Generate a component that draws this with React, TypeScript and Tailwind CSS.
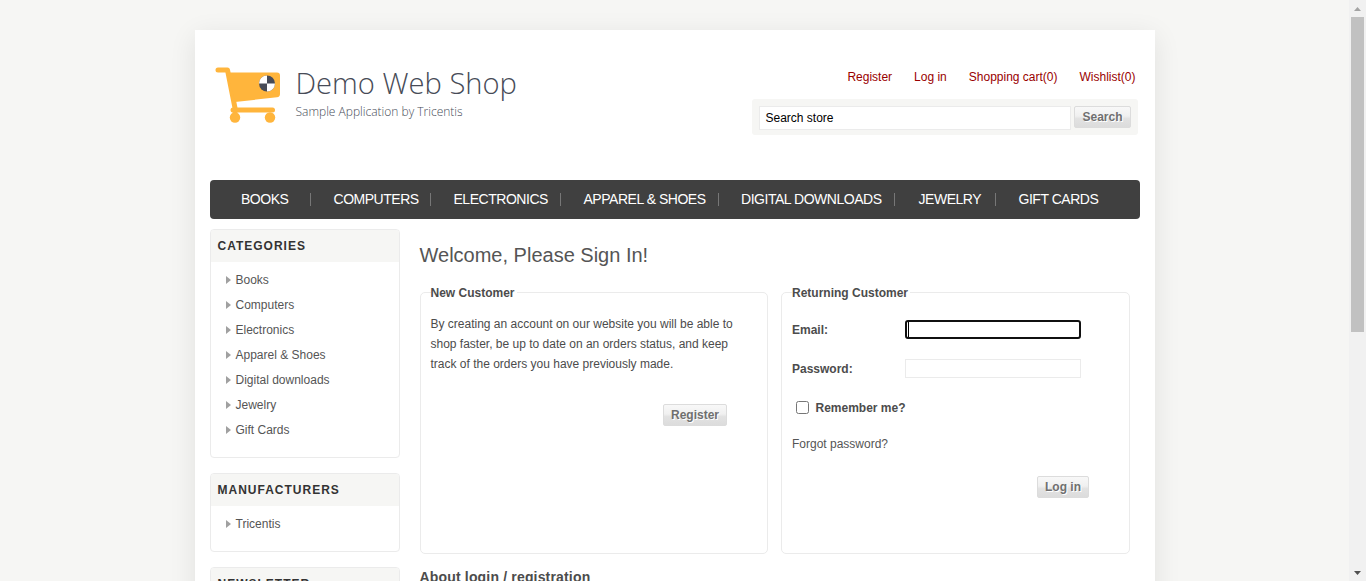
import React from "react";

const headerLinks = ["Register", "Log in", "Shopping cart(0)", "Wishlist(0)"];

const navItems = [
  { label: "BOOKS", cell: "w-[101px] pl-[31.5px] border-r" },
  { label: "COMPUTERS", cell: "w-[120px] pl-[23px] border-r" },
  { label: "ELECTRONICS", cell: "w-[130px] pl-[23px] border-r" },
  { label: "APPAREL & SHOES", cell: "w-[158px] pl-[23px] border-r" },
  { label: "DIGITAL DOWNLOADS", cell: "w-[176px] pl-[22.5px] border-r" },
  { label: "JEWELRY", cell: "w-[101px] pl-[24px] border-r" },
  { label: "GIFT CARDS", cell: "pl-[23px]" },
];

const categories = ["Books", "Computers", "Electronics", "Apparel & Shoes", "Digital downloads", "Jewelry", "Gift Cards"];

function CartLogo() {
  return (
    <svg width="66" height="57" viewBox="0 0 66 57" className="shrink-0">
      <path d="M3 3H12.5L20 41V45" fill="none" stroke="#ffb53c" strokeWidth="5" strokeLinecap="round" strokeLinejoin="round" />
      <path d="M12.5 5.5H62Q65 5.5 65 8.500V27Q65 30 62 30.300L20 35Z" fill="#ffb53c" />
      <path d="M18 43H57.500" stroke="#ffb53c" strokeWidth="5" strokeLinecap="round" />
      <circle cx="20" cy="50.500" r="5.200" fill="#ffb53c" />
      <circle cx="55" cy="50.500" r="5.200" fill="#ffb53c" />
      <circle cx="52" cy="16.500" r="8" fill="#474b57" />
      <path d="M52 16.500V8.500A8 8 0 0 0 44 16.500ZM52 16.500V24.500A8 8 0 0 0 60 16.500Z" fill="#fff" />
    </svg>
  );
}

function Button({ children, className }: { children: React.ReactNode; className: string }) {
  return (
    <button
      className={`block h-[22px] rounded-[2px] border border-[#dcdcdc] bg-[linear-gradient(#f8f8f8_0%,#f0f0f0_45%,#e2e2e2_58%,#dcdcdc_100%)] pl-px text-center text-[12px] leading-[20px] font-bold whitespace-nowrap text-[#6f6f6f] [text-shadow:1px_1px_0_#fff] ${className}`}
    >
      {children}
    </button>
  );
}

function Block({ title, items, className }: { title: string; items: string[]; className: string }) {
  return (
    <section className={`overflow-hidden rounded-[4px] border border-[#ebebeb] ${className}`}>
      <h2 className="h-[32px] bg-[#f6f6f4] pl-[7px] text-[12px] leading-[32px] font-bold tracking-[1px] text-[#333]">{title}</h2>
      <ul className="pt-[5px]">
        {items.map((item) => (
          <li key={item} className="flex h-[25px] items-center pl-[15px] text-[12px] text-[#555]">
            <svg width="5" height="8" viewBox="0 0 5 8" className="mr-[5px]">
              <path d="M0 0L5 4L0 8Z" fill="#a0a0a0" />
            </svg>
            {item}
          </li>
        ))}
      </ul>
    </section>
  );
}

function Scrollbar() {
  return (
    <div className="flex w-[17px] shrink-0 flex-col items-end bg-[#f1f1f1] pr-[2px]">
      <div className="flex h-[17px] items-center pr-[3px]">
        <svg width="7" height="4" viewBox="0 0 7 4"><path d="M0 4L3.500 0L7 4Z" fill="#a3a3a3" /></svg>
      </div>
      <div className="h-[315px] w-[13px] bg-[#c1c1c1]" />
      <div className="mt-auto flex h-[17px] items-center pr-[3px]">
        <svg width="7" height="4" viewBox="0 0 7 4"><path d="M0 0L3.500 4L7 0Z" fill="#505050" /></svg>
      </div>
    </div>
  );
}

export default function App() {
  return (
    <div className="flex h-[581px] w-[1366px] overflow-hidden bg-[#f6f6f4] font-['Liberation_Sans',Arial,sans-serif] text-[12px] text-[#4c4c4c]">
      <div className="flex flex-1 justify-center overflow-hidden pt-[30px]">
        <div className="h-[700px] w-[960px] shrink-0 bg-white px-[15px] shadow-[0_6px_26px_rgba(0,0,0,0.09)]">
          <header className="flex h-[150px] justify-between">
            <div className="flex pt-[37px] pl-[5.5px]">
              <CartLogo />
              <div className="ml-[14.5px] font-['Open_Sans',sans-serif] font-light whitespace-nowrap">
                <div className="mt-[-3px] text-[29.15px] leading-[38px] text-[#474b57]">Demo Web Shop</div>
                <div className="mt-px text-[12px] leading-[18px] text-[#474b57]">Sample Application by Tricentis</div>
              </div>
            </div>
            <div className="mr-[2px] w-[386px] pt-[39px]">
              <nav className="flex h-[16px] justify-end gap-[22px] pr-[2px] leading-[16px] whitespace-nowrap text-[#990000]">
                {headerLinks.map((l) => (
                  <a key={l}>{l}</a>
                ))}
              </nav>
              <div className="mt-[14px] flex h-[36px] rounded-[3px] bg-[#f6f6f4] pt-[7px] pl-[7px]">
                <div className="h-[24px] w-[312px] border border-[#ebebeb] bg-white pl-[6px] leading-[22px] text-black">Search store</div>
                <Button className="ml-[3px] w-[57px]">Search</Button>
              </div>
            </div>
          </header>

          <nav className="flex h-[39px] rounded-[4px] bg-[#404040] pt-[13px] text-[14px] tracking-[-0.47px] whitespace-nowrap text-white">
            {navItems.map(({ label, cell }) => (
              <a key={label} className={`h-[13px] shrink-0 border-[#777] leading-[13px] ${cell}`}>
                {label}
              </a>
            ))}
          </nav>

          <div className="flex pt-[10px]">
            <aside className="flex w-[190px] shrink-0 flex-col gap-[15px]">
              <Block title="CATEGORIES" items={categories} className="h-[229px]" />
              <Block title="MANUFACTURERS" items={["Tricentis"]} className="h-[79px]" />
              <Block title="NEWSLETTER" items={[]} className="h-[100px]" />
            </aside>

            <main className="ml-[20px] w-[710px]">
              <h1 className="pt-[14px] text-[20px] leading-[24px] text-[#555]">Welcome, Please Sign In!</h1>
              <div className="mt-[25px] flex gap-[13px]">
                <section className="h-[262px] w-[348px] rounded-[5px] border border-[#ebebeb] pl-[10px]">
                  <h2 className="mt-[-8px] w-[86px] bg-white leading-[16px] font-bold whitespace-nowrap">New Customer</h2>
                  <p className="mt-[13px] leading-[20px] whitespace-nowrap">
                    By creating an account on our website you will be able to
                    <br />
                    shop faster, be up to date on an orders status, and keep
                    <br />
                    track of the orders you have previously made.
                  </p>
                  <Button className="mt-[30px] ml-[232px] w-[64px]">Register</Button>
                </section>

                <section className="h-[262px] w-[349px] rounded-[5px] border border-[#ebebeb] pl-[10.5px]">
                  <h2 className="mt-[-8px] w-[118px] bg-white leading-[16px] font-bold whitespace-nowrap">Returning Customer</h2>
                  <div className="mt-[19px] flex h-[19px] items-center font-bold">
                    <span className="w-[113px]">Email:</span>
                    <div className="flex h-[19px] w-[176px] items-center rounded-[3px] border-2 border-[#101010] pl-px">
                      <span className="h-[15px] w-px bg-black" />
                    </div>
                  </div>
                  <div className="mt-[20px] flex h-[19px] items-center font-bold">
                    <span className="w-[113px]">Password:</span>
                    <div className="h-[19px] w-[176px] border border-[#ebebeb]" />
                  </div>
                  <div className="mt-[21px] flex h-[17px] items-center pl-[4px] font-bold">
                    <span className="mr-[6.5px] h-[13px] w-[13px] rounded-[2.500px] border border-[#767676] bg-white" />
                    Remember me?
                  </div>
                  <div className="mt-[20px] leading-[16px] text-[#555]">Forgot password?</div>
                  <Button className="mt-[24px] ml-[244.5px] w-[52px]">Log in</Button>
                </section>
              </div>
              <h2 className="mt-[13px] text-[14px] leading-[20px] font-bold tracking-[0.17px]">About login / registration</h2>
            </main>
          </div>
        </div>
      </div>
      <Scrollbar />
    </div>
  );
}
